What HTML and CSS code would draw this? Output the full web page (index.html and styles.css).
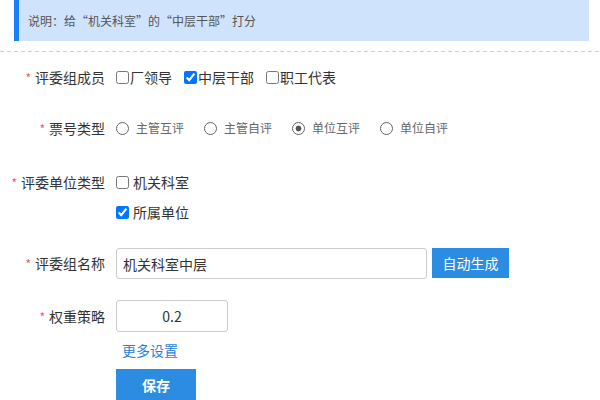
FILE: index.html
```html
<!DOCTYPE html>
<html lang="zh-CN">
<head>
<meta charset="utf-8">
<title>评委组设置</title>
<link rel="stylesheet" href="styles.css">
</head>
<body>
<div class="notice">说明：给“机关科室”的“中层干部”打分</div>
<div class="divider"></div>
<form class="form">
  <div class="row row-members">
    <div class="label"><span class="star">*</span>评委组成员</div>
    <div class="field">
      <label class="check"><input type="checkbox">厂领导</label>
      <label class="check"><input type="checkbox" checked>中层干部</label>
      <label class="check"><input type="checkbox">职工代表</label>
    </div>
  </div>
  <div class="row row-ticket">
    <div class="label"><span class="star">*</span>票号类型</div>
    <div class="field">
      <label class="radio"><input type="radio" name="t">主管互评</label>
      <label class="radio"><input type="radio" name="t">主管自评</label>
      <label class="radio"><input type="radio" name="t" checked>单位互评</label>
      <label class="radio"><input type="radio" name="t">单位自评</label>
    </div>
  </div>
  <div class="row row-units">
    <div class="label"><span class="star">*</span>评委单位类型</div>
    <div class="field field-col">
      <label class="check check-line"><input type="checkbox">机关科室</label>
      <label class="check check-line"><input type="checkbox" checked>所属单位</label>
    </div>
  </div>
  <div class="row row-name">
    <div class="label"><span class="star">*</span>评委组名称</div>
    <div class="field field-top">
      <input class="text name-input" type="text" value="机关科室中层">
      <button type="button" class="btn btn-auto">自动生成</button>
    </div>
  </div>
  <div class="row row-weight">
    <div class="label"><span class="star">*</span>权重策略</div>
    <div class="field">
      <input class="text weight-input" type="text" value="0.2">
    </div>
  </div>
  <div class="row row-more">
    <div class="label"></div>
    <div class="field"><a class="more" href="#">更多设置</a></div>
  </div>
  <div class="row row-save">
    <div class="label"></div>
    <div class="field field-top"><button type="button" class="btn btn-save">保存</button></div>
  </div>
</form>
</body>
</html>
```
FILE: styles.css
```css
html, body {
  margin: 0;
  padding: 0;
  background: #fff;
}
body {
  font-family: "Noto Sans CJK SC", "Noto Sans", "Liberation Sans", sans-serif;
  color: #333;
  font-size: 14px;
  overflow: hidden;
}
.notice {
  margin: 0 11px 0 14px;
  height: 41px;
  box-sizing: border-box;
  background: #cfe3fc;
  border-left: 5px solid #1b7ff6;
  padding-left: 9px;
  display: flex;
  align-items: center;
  font-size: 12px;
  color: #555;
}
.divider {
  margin-top: 10px;
  height: 1px;
  background: repeating-linear-gradient(to right, #cfcfcf 0 4px, transparent 4px 7px);
}
.form {
  margin: 0;
  padding: 0;
}
.row {
  display: flex;
  align-items: center;
}
.label {
  width: 105px;
  margin-right: 11px;
  flex: none;
  text-align: right;
  line-height: 30px;
  color: #333;
  font-size: 14px;
  white-space: nowrap;
}
.star {
  color: #f0585c;
  font-size: 12px;
  margin-right: 4px;
}
.field {
  display: flex;
  align-items: center;
}
.field-col {
  flex-direction: column;
  align-items: flex-start;
}
.field-top {
  align-items: flex-start;
  align-self: stretch;
}
.row-members { margin-top: 10px; height: 30px; }
.row-ticket { margin-top: 21px; height: 30px; }
.row-units { margin-top: 24px; height: 60px; align-items: flex-start; }
.row-name { margin-top: 21px; height: 31px; }
.row-weight { margin-top: 21px; height: 32px; }
.row-more { margin-top: 8px; height: 20px; }
.row-save { margin-top: 9px; height: 32px; }

.check {
  display: flex;
  align-items: center;
  margin-right: 12px;
  color: #333;
  font-size: 14px;
  line-height: 30px;
}
.check input {
  margin: 0 1px 0 0;
  width: 13px;
  height: 13px;
}
.check-line {
  height: 30px;
}
.check-line input {
  margin-right: 4px;
}
.radio {
  display: flex;
  align-items: center;
  margin-right: 20px;
  font-size: 12px;
  color: #666;
  line-height: 30px;
}
.radio input {
  -webkit-appearance: none;
  appearance: none;
  margin: 0 7px 0 0;
  width: 13px;
  height: 13px;
  box-sizing: border-box;
  border: 1.5px solid #666;
  border-radius: 50%;
  background: #fff;
}
.radio input:checked {
  background: radial-gradient(circle, #555 0 2.6px, #fff 3.2px);
}
.text {
  box-sizing: border-box;
  border: 1px solid #ccc;
  border-radius: 3px;
  font-family: inherit;
  font-size: 14px;
  color: #333;
  outline: none;
  margin: 0;
  background: #fff;
}
.name-input {
  width: 311px;
  height: 31px;
  padding: 0 6px;
}
.weight-input {
  width: 112px;
  height: 32px;
  text-align: center;
  padding: 0;
}
.btn {
  border: none;
  margin: 0;
  background: #2b8ce2;
  color: #fff;
  font-family: inherit;
  font-size: 14px;
  padding: 0;
  cursor: pointer;
}
.btn-auto {
  margin-left: 5px;
  width: 77px;
  height: 30px;
}
.btn-save {
  width: 80px;
  height: 32px;
  font-weight: bold;
}
.more {
  margin-left: 6px;
  color: #2a7fe0;
  text-decoration: none;
  font-size: 14px;
  line-height: 20px;
}
```
